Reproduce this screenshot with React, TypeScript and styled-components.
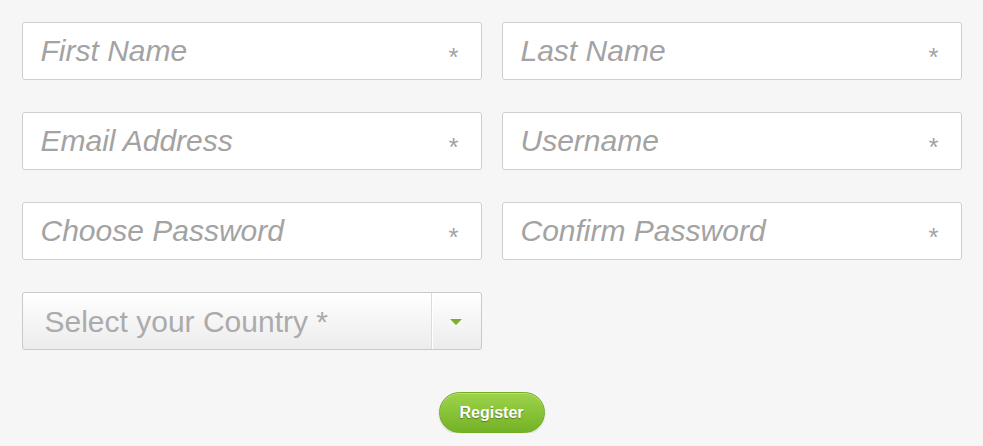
import React from "react";
import styled, { createGlobalStyle } from "styled-components";

const Global = createGlobalStyle`
  html, body { margin: 0; padding: 0; background: #f6f6f6; }
  body { font-family: "Liberation Sans", Arial, sans-serif; }
  * { box-sizing: border-box; }
`;

const Form = styled.form`
  padding: 22px 22px 0 22px;
  display: flex;
  flex-direction: column;
  align-items: center;
  width: 983px;
`;

const Grid = styled.div`
  display: grid;
  grid-template-columns: 460px 460px;
  column-gap: 20px;
  row-gap: 32px;
  width: 940px;
`;

const Field = styled.label`
  display: flex;
  align-items: center;
  height: 58px;
  background: #fff;
  border: 1px solid #cfcfcf;
  border-radius: 3px;
  padding: 0 22px 0 18px;
`;

const Input = styled.input`
  flex: 1;
  min-width: 0;
  border: 0;
  outline: none;
  background: transparent;
  font-family: "Liberation Sans", Arial, sans-serif;
  font-style: italic;
  font-size: 30px;
  color: #555;
  padding: 0;
  &::placeholder { color: #a3a3a3; opacity: 1; }
`;

const Star = styled.span`
  font-family: "Liberation Sans", Arial, sans-serif;
  font-size: 26px;
  color: #a3a3a3;
  margin-top: 12px;
`;

const Select = styled.div`
  display: flex;
  height: 58px;
  border: 1px solid #c9c9c9;
  border-radius: 3px;
  background: linear-gradient(#ffffff, #ececec);
  box-shadow: inset 0 1px 0 #fff;
`;

const SelectText = styled.span`
  flex: 1;
  display: flex;
  align-items: center;
  padding: 1px 0 0 22px;
  font-size: 30px;
  color: #ababab;
`;

const ArrowBox = styled.span`
  width: 50px;
  display: flex;
  align-items: center;
  justify-content: center;
  border-left: 1px solid #dcdcdc;
  box-shadow: inset 1px 0 0 #fff;
  padding-top: 2px;
`;

const Arrow = styled.span`
  width: 0;
  height: 0;
  border-left: 6px solid transparent;
  border-right: 6px solid transparent;
  border-top: 6px solid #78b02c;
`;

const Button = styled.button`
  margin-top: 42px;
  width: 106px;
  height: 41px;
  border-radius: 21px;
  border: 1px solid #72ad22;
  background: linear-gradient(#9dd34a, #74b226);
  box-shadow: 0 1px 2px rgba(0, 0, 0, 0.15), inset 0 1px 0 rgba(255, 255, 255, 0.3);
  color: #fff;
  font-family: "Liberation Sans", Arial, sans-serif;
  font-weight: bold;
  font-size: 16px;
  text-shadow: 0 1px 1px rgba(0, 0, 0, 0.35);
  cursor: pointer;
`;

const fields = [
  "First Name",
  "Last Name",
  "Email Address",
  "Username",
  "Choose Password",
  "Confirm Password",
];

export default function App() {
  return (
    <>
      <Global />
      <Form onSubmit={(e) => e.preventDefault()}>
        <Grid>
          {fields.map((f) => (
            <Field key={f}>
              <Input
                placeholder={f}
                type={f.includes("Password") ? "password" : "text"}
              />
              <Star>*</Star>
            </Field>
          ))}
          <Select>
            <SelectText>Select your Country *</SelectText>
            <ArrowBox>
              <Arrow />
            </ArrowBox>
          </Select>
        </Grid>
        <Button type="submit">Register</Button>
      </Form>
    </>
  );
}
